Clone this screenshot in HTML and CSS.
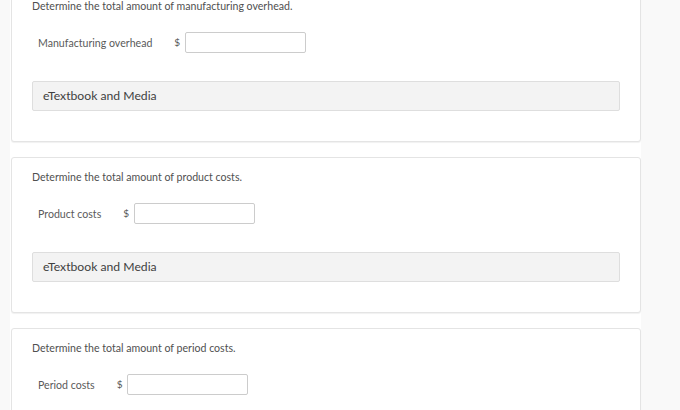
FILE: index.html
```html
<!DOCTYPE html>
<html>
<head>
<meta charset="utf-8">
<link rel="stylesheet" href="styles.css">
</head>
<body>
<div class="page">
  <section class="card">
    <p class="question">Determine the total amount of manufacturing overhead.</p>
    <div class="answer-row">
      <span class="label">Manufacturing overhead</span>
      <span class="dollar">$</span>
      <input class="field" type="text">
    </div>
    <div class="media-bar">eTextbook and Media</div>
  </section>
  <section class="card">
    <p class="question">Determine the total amount of product costs.</p>
    <div class="answer-row">
      <span class="label">Product costs</span>
      <span class="dollar">$</span>
      <input class="field" type="text">
    </div>
    <div class="media-bar">eTextbook and Media</div>
  </section>
  <section class="card">
    <p class="question">Determine the total amount of period costs.</p>
    <div class="answer-row">
      <span class="label">Period costs</span>
      <span class="dollar">$</span>
      <input class="field" type="text">
    </div>
    <div class="media-bar">eTextbook and Media</div>
  </section>
</div>
</body>
</html>
```

FILE: styles.css
```css
html, body {
  margin: 0;
  padding: 0;
  background: #f9f9f9;
  font-family: Lato, "Open Sans", sans-serif;
  overflow: hidden;
}

.page {
  width: 631px;
  margin-left: 10px;
  margin-top: -14px;
  background: #fff;
  display: flex;
  flex-direction: column;
  gap: 15px;
  padding-left: 1px;
  box-sizing: border-box;
}

.card {
  border: 1px solid #e4e4e4;
  border-radius: 3px;
  box-shadow: 0 1px 1px rgba(0,0,0,0.06);
  padding: 12px 20px 30px 20px;
  background: #fff;
}

.question {
  margin: 0;
  font-size: 10.6px;
  line-height: 14px;
  color: #505050;
}

.answer-row {
  display: flex;
  align-items: center;
  margin-top: 19px;
  padding-left: 6px;
}

.label {
  font-size: 10.6px;
  color: #5a5a5a;
  margin-right: 22px;
}

.dollar {
  font-size: 10px;
  color: #555;
  margin-right: 5px;
  position: relative;
  top: -1px;
}

.field {
  width: 121px;
  height: 21px;
  box-sizing: border-box;
  border: 1px solid #ccc;
  border-radius: 2px;
  margin: 0;
  padding: 0 4px;
  background: #fff;
}

.media-bar {
  margin-top: 28px;
  height: 30px;
  box-sizing: border-box;
  border: 1px solid #dedede;
  border-radius: 2px;
  background: #f3f3f3;
  padding-left: 10px;
  font-size: 12.2px;
  line-height: 28px;
  color: #3f3f3f;
}
```
